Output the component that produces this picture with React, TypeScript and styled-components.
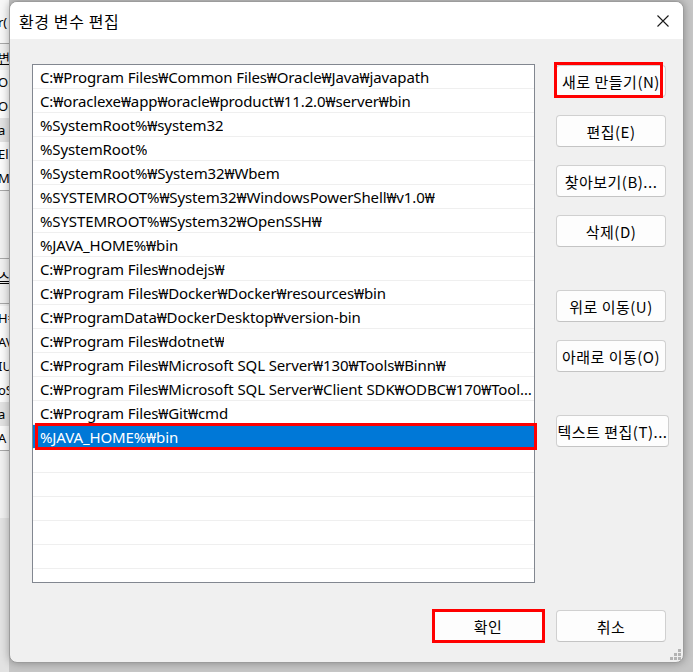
import React from 'react';
import styled, { createGlobalStyle } from 'styled-components';

const Global = createGlobalStyle`
  html, body { margin: 0; padding: 0; }
  body {
    width: 693px; height: 672px; overflow: hidden;
    background: #c9c9c9;
    font-family: "Noto Sans", "Noto Sans CJK KR", sans-serif;
  }
`;

const Desktop = styled.div`
  width: 693px;
  height: 672px;
  display: flex;
  align-items: flex-start;
  background: #c6c6c6;
  overflow: hidden;
`;

const BackWindow = styled.div`
  width: 9px;
  flex: none;
  height: 672px;
  overflow: hidden;
  background: #f0f0f0;
  display: flex;
  flex-direction: column;
`;

const BackRow = styled.div<{ $h: number; $bg?: string; $align?: string }>`
  flex: none;
  height: ${(p) => p.$h}px;
  background: ${(p) => p.$bg || 'transparent'};
  display: flex;
  align-items: ${(p) => p.$align || 'center'};
  font-family: "Noto Sans", "Noto Sans CJK KR", sans-serif;
  font-size: 13px;
  color: #000;
  white-space: nowrap;
  text-indent: -2px;
`;

const BackLine = styled.div`
  flex: none;
  height: 1px;
  background: #a8a8a8;
`;

const BackFill = styled.div<{ $bg: string }>`
  flex: 1;
  background: ${(p) => p.$bg};
`;

const Underlined = styled.span`
  text-decoration: underline;
`;

const BackLabel = styled.span`
  padding-top: 8px;
`;

const Dialog = styled.div`
  position: relative;
  z-index: 1;
  margin-top: 1px;
  width: 675px;
  height: 662px;
  flex: none;
  box-sizing: border-box;
  border: 1px solid #9c9c9c;
  border-radius: 8px;
  background: #f0f0f0;
  box-shadow: 0 0 9px rgba(0, 0, 0, 0.32);
  display: flex;
  flex-direction: column;
  overflow: hidden;
`;

const TitleBar = styled.div`
  height: 37px;
  flex: none;
  background: #ffffff;
  display: flex;
  align-items: center;
  justify-content: space-between;
  padding: 0 14px 0 9px;
`;

const Title = styled.div`
  font-family: "Noto Sans CJK KR", sans-serif;
  font-size: 16px;
  letter-spacing: 0.6px;
  color: #000;
`;

const CloseButton = styled.div`
  width: 12px;
  height: 12px;
  display: flex;
`;

const Body = styled.div`
  flex: 1;
  display: flex;
  flex-direction: column;
  gap: 27px;
  padding: 25px 17px 20px 22px;
`;

const Main = styled.div`
  display: flex;
  gap: 21px;
`;

const List = styled.div`
  width: 503px;
  height: 519px;
  box-sizing: border-box;
  border: 1px solid #828790;
  background: #ffffff;
  display: flex;
  flex-direction: column;
`;

const Row = styled.div<{ $selected?: boolean; $h?: number; $last?: boolean }>`
  position: relative;
  flex: none;
  height: ${(p) => p.$h || 24}px;
  box-sizing: border-box;
  border-bottom: ${(p) => (p.$last ? 'none' : '1px solid #efefef')};
  background: ${(p) => (p.$selected ? '#0078d7' : 'transparent')};
  color: ${(p) => (p.$selected ? '#ffffff' : '#000000')};
  display: flex;
  align-items: center;
  padding: 0 0 0 7px;
`;

const RowText = styled.span`
  font-family: "Noto Sans", "Noto Sans CJK KR", sans-serif;
  font-size: 15px;
  letter-spacing: -0.12px;
  white-space: nowrap;
  overflow: hidden;
  text-overflow: ellipsis;
  min-width: 0;
`;

const ButtonColumn = styled.div`
  display: flex;
  flex-direction: column;
  align-items: flex-start;
  padding-top: 1px;
`;

const Button = styled.div<{ $w?: number; $mt?: number }>`
  position: relative;
  width: ${(p) => p.$w || 110}px;
  height: 32px;
  margin-top: ${(p) => p.$mt || 0}px;
  box-sizing: border-box;
  border: 1px solid #d0d0d0;
  border-bottom-color: #c4c4c4;
  border-radius: 4px;
  background: #fdfdfd;
  display: flex;
  align-items: center;
  justify-content: center;
  font-family: "Noto Sans CJK KR", sans-serif;
  font-size: 15px;
  letter-spacing: 0.5px;
  color: #000;
  white-space: nowrap;
`;

const Footer = styled.div`
  display: flex;
  justify-content: flex-end;
  gap: 13px;
`;

const Highlight = styled.span<{ $t: number; $r: number; $b: number; $l: number }>`
  position: absolute;
  top: ${(p) => p.$t}px;
  right: ${(p) => p.$r}px;
  bottom: ${(p) => p.$b}px;
  left: ${(p) => p.$l}px;
  border: 3px solid #ff0000;
  pointer-events: none;
`;

const Grip = styled.svg`
  position: absolute;
  right: 2px;
  bottom: 2px;
`;

const paths = [
  'C:₩Program Files₩Common Files₩Oracle₩Java₩javapath',
  'C:₩oraclexe₩app₩oracle₩product₩11.2.0₩server₩bin',
  '%SystemRoot%₩system32',
  '%SystemRoot%',
  '%SystemRoot%₩System32₩Wbem',
  '%SYSTEMROOT%₩System32₩WindowsPowerShell₩v1.0₩',
  '%SYSTEMROOT%₩System32₩OpenSSH₩',
  '%JAVA_HOME%₩bin',
  'C:₩Program Files₩nodejs₩',
  'C:₩Program Files₩Docker₩Docker₩resources₩bin',
  'C:₩ProgramData₩DockerDesktop₩version-bin',
  'C:₩Program Files₩dotnet₩',
  'C:₩Program Files₩Microsoft SQL Server₩130₩Tools₩Binn₩',
  'C:₩Program Files₩Microsoft SQL Server₩Client SDK₩ODBC₩170₩Tools₩Binn₩',
  'C:₩Program Files₩Git₩cmd',
  '%JAVA_HOME%₩bin',
];

const backTop = ['Or', 'Or', 'a', 'El', 'M'];
const backBottom = ['H=', 'AV', 'IU', 'oS', 'a', 'A'];

export default function App() {
  return (
    <>
      <Global />
      <Desktop>
        <BackWindow>
          <BackRow $h={43} $bg="#f7f7f7">r(</BackRow>
          <BackLine />
          <BackRow $h={26}>
            <Underlined>변</Underlined>
          </BackRow>
          {backTop.map((t, i) => (
            <BackRow key={i} $h={24} $bg={i === 2 ? '#e2e2e2' : '#fbfbfb'}>
              {t}
            </BackRow>
          ))}
          <BackLine />
          <BackRow $h={67} />
          <BackLine />
          <BackRow $h={44} $align="flex-start">
            <BackLabel>
              <Underlined>스</Underlined>
            </BackLabel>
          </BackRow>
          <BackLine />
          <BackRow $h={2} />
          {backBottom.map((t, i) => (
            <BackRow key={i} $h={24} $bg={i === 4 ? '#e2e2e2' : '#fbfbfb'}>
              {t}
            </BackRow>
          ))}
          <BackLine />
          <BackRow $h={67} />
          <BackFill $bg="#e2e2e2" />
        </BackWindow>

        <Dialog>
          <TitleBar>
            <Title>환경 변수 편집</Title>
            <CloseButton>
              <svg width="12" height="12" viewBox="0 0 12 12">
                <path d="M0.5 0.5 L11.5 11.5 M11.5 0.5 L0.5 11.5" stroke="#1a1a1a" strokeWidth="1.1" fill="none" />
              </svg>
            </CloseButton>
          </TitleBar>
          <Body>
            <Main>
              <List>
                {paths.map((p, i) => {
                  const selected = i === paths.length - 1;
                  return (
                    <Row key={i} $selected={selected}>
                      <RowText>{p}</RowText>
                      {selected && <Highlight $t={-2} $r={-3} $b={-2} $l={2} />}
                    </Row>
                  );
                })}
                {[0, 1, 2, 3, 4].map((i) => (
                  <Row key={'e' + i} />
                ))}
                <Row $h={13} $last />
              </List>
              <ButtonColumn>
                <Button>
                  새로 만들기(N)
                  <Highlight $t={-4} $r={2} $b={-2} $l={-3} />
                </Button>
                <Button $mt={18}>편집(E)</Button>
                <Button $mt={18}>찾아보기(B)...</Button>
                <Button $mt={18}>삭제(D)</Button>
                <Button $mt={43}>위로 이동(U)</Button>
                <Button $mt={18}>아래로 이동(O)</Button>
                <Button $mt={43} $w={113}>
                  텍스트 편집(T)...
                </Button>
              </ButtonColumn>
            </Main>
            <Footer>
              <Button>
                확인
                <Highlight $t={-2} $r={-3} $b={-2} $l={-2} />
              </Button>
              <Button>취소</Button>
            </Footer>
          </Body>
          <Grip width="11" height="11" viewBox="0 0 11 11">
            {[
              [8, 0],
              [4, 4],
              [8, 4],
              [0, 8],
              [4, 8],
              [8, 8],
            ].map(([x, y], i) => (
              <rect key={i} x={x} y={y} width="3" height="3" fill="#b4b4b4" />
            ))}
          </Grip>
        </Dialog>
      </Desktop>
    </>
  );
}
